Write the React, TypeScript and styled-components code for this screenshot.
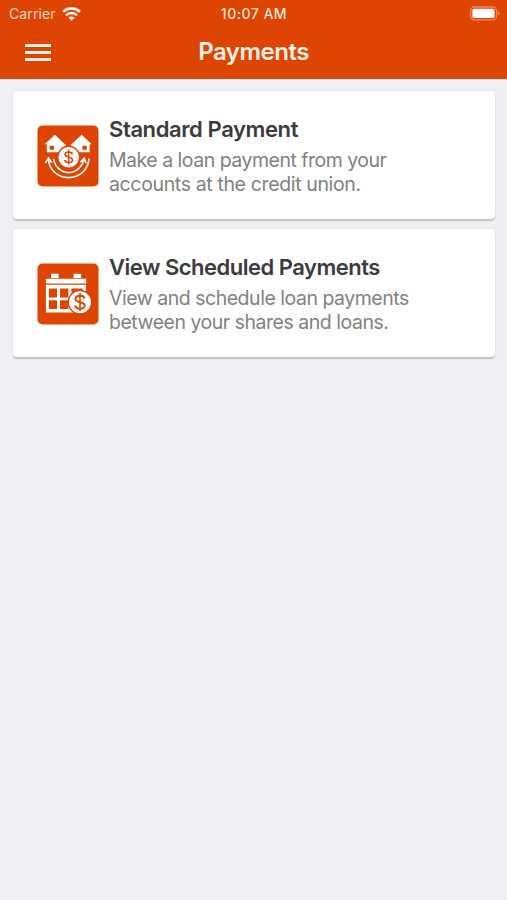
import React from "react";
import styled, { createGlobalStyle } from "styled-components";

const ORANGE = "#df4502";

const GlobalStyle = createGlobalStyle`
  * { box-sizing: border-box; }
  body {
    margin: 0;
    background: #eeeef3;
    font-family: Inter, "Liberation Sans", sans-serif;
    -webkit-font-smoothing: antialiased;
  }
`;

const Screen = styled.div`
  width: 100%;
  min-height: 900px;
  background: #eeeef3;
`;

const Header = styled.header`
  height: 79px;
  background: ${ORANGE};
  color: #fff0e6;
`;

const StatusBar = styled.div`
  display: grid;
  grid-template-columns: 1fr auto 1fr;
  align-items: center;
  height: 27px;
  padding: 0 7px 0 9px;
`;

const Carrier = styled.div`
  display: flex;
  align-items: center;
  gap: 6px;
  font-size: 14px;
  line-height: 18px;
  letter-spacing: 0.1px;
  color: #ffd9c4;
`;

const Clock = styled.div`
  padding-right: 1px;
  font-size: 14px;
  font-weight: 500;
  line-height: 18px;
  letter-spacing: 0.5px;
  color: #ffe3d3;
`;

const Battery = styled.svg`
  display: block;
  justify-self: end;
`;

const NavBar = styled.div`
  display: grid;
  grid-template-columns: 1fr auto 1fr;
  align-items: center;
  height: 50px;
  padding: 0 25px;
`;

const MenuButton = styled.button`
  display: flex;
  flex-direction: column;
  gap: 4px;
  width: 26px;
  padding: 0;
  border: 0;
  background: none;
`;

const MenuLine = styled.span`
  width: 100%;
  height: 3px;
  background: #fff0e4;
`;

const Title = styled.h1`
  margin: 0;
  font-size: 24px;
  font-weight: 600;
  line-height: 30px;
  letter-spacing: -0.5px;
`;

const CardList = styled.main`
  display: flex;
  flex-direction: column;
  gap: 10px;
  padding: 12px 12px 0 13px;
`;

const Card = styled.section`
  display: flex;
  align-items: center;
  gap: 10px;
  height: 128px;
  padding: 2px 0 0 24px;
  border-radius: 4px;
  background: #fff;
  box-shadow: 0 1.5px 1px #c2c2c8, 0 0 2px #dcdce2;
`;

const Tile = styled.svg`
  display: block;
  flex: none;
  width: 62px;
  height: 62px;
`;

const CardText = styled.div`
  display: flex;
  flex-direction: column;
  gap: 6px;
  padding-bottom: 1px;
`;

const CardTitle = styled.h2<{ $track: number }>`
  margin: 0;
  font-size: 22px;
  font-weight: 600;
  line-height: 28px;
  letter-spacing: ${(p) => p.$track}px;
  color: #3b3b3d;
`;

const CardCopy = styled.p`
  margin: 0;
  font-size: 19.5px;
  line-height: 23.4px;
  color: #818183;
  white-space: nowrap;
`;

const CopyLine = styled.span<{ $track: number }>`
  display: block;
  letter-spacing: ${(p) => p.$track}px;
`;

function WifiIcon() {
  return (
    <svg width="19" height="14" viewBox="0 0 19 14" fill="none" stroke="#fff3eb" strokeWidth="2.6">
      <path d="M1 4.8C5.8.2 13.2.2 18 4.8" />
      <path d="M4 8.3c3-3 8-3 11 0" />
      <path d="M6.4 10.7c1.8-1.7 4.4-1.7 6.2 0L9.5 13.8z" fill="#fff3eb" stroke="none" />
    </svg>
  );
}

function BatteryIcon() {
  return (
    <Battery width="31" height="15" viewBox="0 0 31 15">
      <rect x="1.6" y="1" width="26" height="12.8" rx="3.8" fill="none" stroke="#f08a5a" strokeWidth="1.3" />
      <rect x="3.4" y="2.8" width="22.2" height="9.2" rx="1.8" fill="#fff" />
      <path d="M29 5.2c2 .8 2 3.6 0 4.4z" fill="#f08a5a" />
    </Battery>
  );
}

function Dollar({ x, y, size }: { x: number; y: number; size: number }) {
  return (
    <g transform={`translate(${x} ${y}) scale(${size})`} fill="none" stroke={ORANGE} strokeWidth="1.7">
      <path d="M4-3.2C3.6-4.9 2.2-5.6 0-5.6c-2.4 0-4 1-4 2.8C-4-1-2.6-.5 0 0s4.2 1.1 4.2 3C4.2 4.7 2.6 5.8 0 5.8S-4 4.8-4.3 2.9" />
      <path d="M0-8V8" strokeWidth="1.4" />
    </g>
  );
}

function LoanTransferIcon() {
  return (
    <Tile viewBox="0 0 62 62">
      <rect x=".5" y=".5" width="61" height="61" rx="5" fill={ORANGE} />
      <path
        fill="#fff"
        fillRule="evenodd"
        d="M7.6 19.2 17.8 9.8 28.8 20 23 27.3H9.8V19.2zM12.6 20.8v3.9H17v-3.9z"
      />
      <path
        fill="#fff"
        fillRule="evenodd"
        d="M54.8 19.2 44.6 9.8 33.6 20 40 27.3H52.6V19.2zM45.4 20.8v3.9h4.4v-3.9z"
      />
      <g fill="none" stroke="#fff" strokeWidth="1.6">
        <path d="M16.6 33.8c1.4 8 7.2 13.8 15 13.8 7.6 0 13.6-5.6 15.4-13.8" />
        <path d="M11.4 34c.6 10.6 9.2 18.6 20.2 18.6S51.4 44.4 52 33.4" />
        <path d="M8.4 37.8 11.4 33l3.2 4.6M43.4 37.2l3.8-4 1.9 5" />
      </g>
      <circle cx="31.7" cy="32.2" r="11.6" fill={ORANGE} />
      <circle cx="31.7" cy="32.2" r="10.3" fill="#fff" />
      <Dollar x={31.7} y={32.2} size={0.92} />
    </Tile>
  );
}

function CalendarIcon() {
  return (
    <Tile viewBox="0 0 62 62">
      <rect x=".5" y=".5" width="61" height="61" rx="5" fill={ORANGE} />
      <path fill="#fff" d="M14 10.8h7.6V15H14zM36.6 10.8h7.6V15h-7.6zM8.9 15.8h40.3v4.8H8.9z" />
      <path
        fill="#fff"
        fillRule="evenodd"
        d="M8.9 21.8H49v27.6H8.9zM11.9 25.6v8.8H20v-8.8zM23 25.6v8.8h8.4v-8.8zM34.4 25.6v8.8h11.2v-8.8zM11.9 37.2V46H20v-8.8zM23 37.2V46h8.4v-8.8z"
      />
      <circle cx="43" cy="39.2" r="12.4" fill={ORANGE} />
      <circle cx="43" cy="39.2" r="11" fill="#fff" />
      <Dollar x={43} y={39.2} size={1.14} />
    </Tile>
  );
}

export default function App() {
  return (
    <Screen>
      <GlobalStyle />
      <Header>
        <StatusBar>
          <Carrier>
            Carrier
            <WifiIcon />
          </Carrier>
          <Clock>10:07 AM</Clock>
          <BatteryIcon />
        </StatusBar>
        <NavBar>
          <MenuButton aria-label="Menu">
            <MenuLine />
            <MenuLine />
            <MenuLine />
          </MenuButton>
          <Title>Payments</Title>
        </NavBar>
      </Header>
      <CardList>
        <Card>
          <LoanTransferIcon />
          <CardText>
            <CardTitle $track={-0.4}>Standard Payment</CardTitle>
            <CardCopy>
              <CopyLine $track={-0.5}>Make a loan payment from your</CopyLine>
              <CopyLine $track={-0.36}>accounts at the credit union.</CopyLine>
            </CardCopy>
          </CardText>
        </Card>
        <Card>
          <CalendarIcon />
          <CardText>
            <CardTitle $track={-0.5}>View Scheduled Payments</CardTitle>
            <CardCopy>
              <CopyLine $track={-0.48}>View and schedule loan payments</CopyLine>
              <CopyLine $track={-0.48}>between your shares and loans.</CopyLine>
            </CardCopy>
          </CardText>
        </Card>
      </CardList>
    </Screen>
  );
}
